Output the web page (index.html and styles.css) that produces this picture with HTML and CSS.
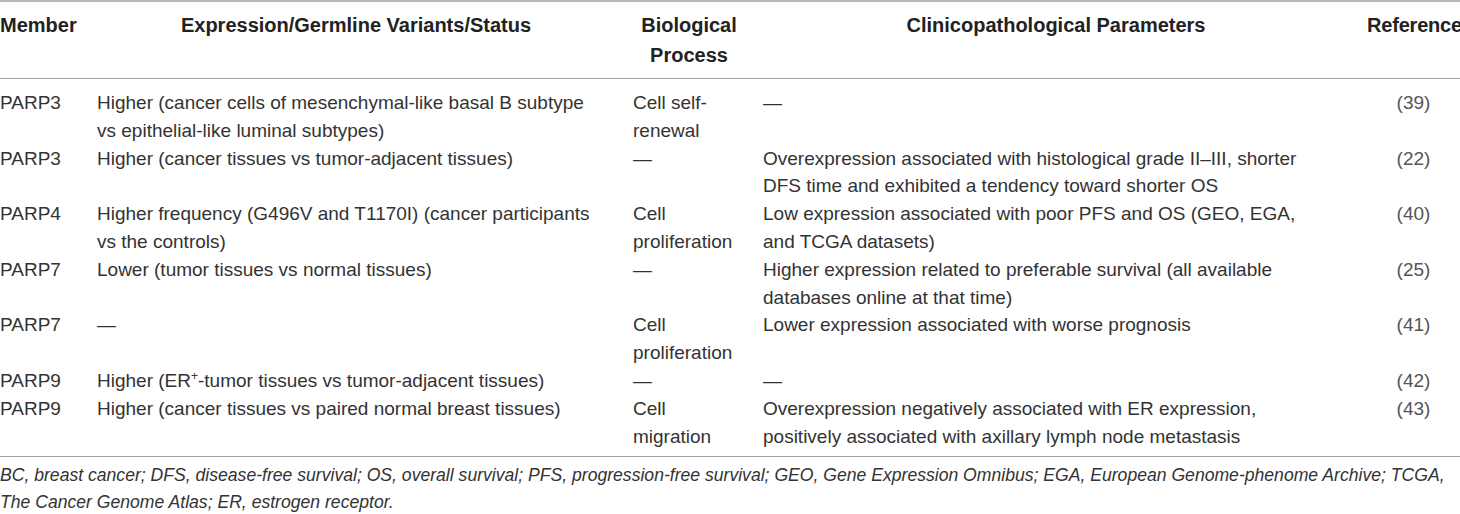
FILE: index.html
```html
<!DOCTYPE html>
<html>
<head>
<meta charset="UTF-8">
<title>PARP family members in breast cancer</title>
<link rel="stylesheet" href="styles.css">
</head>
<body>

<table class="parp">
	<colgroup>
		<col class="c-member">
		<col class="c-expr">
		<col class="c-bio">
		<col class="c-clin">
		<col class="c-ref">
	</colgroup>
	<thead>
		<tr>
			<th class="left">Member</th>
			<th>Expression/Germline Variants/Status</th>
			<th>Biological Process</th>
			<th>Clinicopathological Parameters</th>
			<th class="ref">Reference</th>
		</tr>
	</thead>
	<tbody>
		<tr>
			<td>PARP3</td>
			<td class="expr">Higher (cancer cells of mesenchymal-like basal B subtype vs epithelial-like luminal subtypes)</td>
			<td>Cell self-renewal</td>
			<td class="clin">—</td>
			<td class="ref">(39)</td>
		</tr>
		<tr>
			<td>PARP3</td>
			<td class="expr">Higher (cancer tissues vs tumor-adjacent tissues)</td>
			<td>—</td>
			<td class="clin">Overexpression associated with histological grade II–III, shorter DFS time and exhibited a tendency toward shorter OS</td>
			<td class="ref">(22)</td>
		</tr>
		<tr>
			<td>PARP4</td>
			<td class="expr">Higher frequency (G496V and T1170I) (cancer participants vs the controls)</td>
			<td>Cell proliferation</td>
			<td class="clin">Low expression associated with poor PFS and OS (GEO, EGA, and TCGA datasets)</td>
			<td class="ref">(40)</td>
		</tr>
		<tr>
			<td>PARP7</td>
			<td class="expr">Lower (tumor tissues vs normal tissues)</td>
			<td>—</td>
			<td class="clin">Higher expression related to preferable survival (all available databases online at that time)</td>
			<td class="ref">(25)</td>
		</tr>
		<tr>
			<td>PARP7</td>
			<td class="expr">—</td>
			<td>Cell proliferation</td>
			<td class="clin">Lower expression associated with worse prognosis</td>
			<td class="ref">(41)</td>
		</tr>
		<tr>
			<td>PARP9</td>
			<td class="expr">Higher (ER<sup>+</sup>-tumor tissues vs tumor-adjacent tissues)</td>
			<td>—</td>
			<td class="clin">—</td>
			<td class="ref">(42)</td>
		</tr>
		<tr>
			<td>PARP9</td>
			<td class="expr">Higher (cancer tissues vs paired normal breast tissues)</td>
			<td>Cell migration</td>
			<td class="clin">Overexpression negatively associated with ER expression, positively associated with axillary lymph node metastasis</td>
			<td class="ref">(43)</td>
		</tr>
	</tbody>
	<tfoot>
		<tr>
			<td colspan="5">BC, breast cancer; DFS, disease-free survival; OS, overall survival; PFS, progression-free survival; GEO, Gene Expression Omnibus; EGA, European Genome-phenome Archive; TCGA, The Cancer Genome Atlas; ER, estrogen receptor.</td>
		</tr>
	</tfoot>
</table>

</body>
</html>
```

FILE: styles.css
```css
* {font-family: "Liberation Sans", Arial, sans-serif}

body {
	margin: 0;
	background: #fff;
	color: #333;
}

table.parp {
	width: 1460px;
	table-layout: fixed;
	border-collapse: collapse;
	font-size: 19px;
}

col.c-member {width: 97px}
col.c-expr {width: 536px}
col.c-bio {width: 130px}
col.c-clin {width: 604px}
col.c-ref {width: 93px}

table.parp thead tr {border-top: 2px solid #b8b8b8}

table.parp th {
	font-size: 20px;
	font-weight: bold;
	color: #222;
	line-height: 30px;
	padding: 8px 18px 8px 0;
	text-align: center;
	vertical-align: top;
	border-bottom: 1px solid #a0a0a0;
	white-space: normal;
}

table.parp th.left {text-align: left}
table.parp th.ref {
	padding-right: 1px;
	text-align: right;
	white-space: nowrap;
	letter-spacing: -0.2px;
}
table.parp td.ref {padding-right: 0; text-align: center}

table.parp td {
	line-height: 27.8px;
	padding: 0 18px 0 0;
	vertical-align: top;
}

table.parp td.expr {padding-right: 37px}
table.parp td.clin {padding-right: 45px}

table.parp tbody tr:first-child td {padding-top: 10px}
table.parp tbody tr:last-child td {padding-bottom: 6px}

table.parp td.ref {color: #555}

sup {
	font-size: 12px;
	line-height: 0;
	vertical-align: 7px;
}

table.parp tfoot td {
	border-top: 1px solid #a0a0a0;
	font-size: 17.6px;
	font-style: italic;
	line-height: 27px;
	padding: 5px 0 0 0;
	color: #333;
}
```
